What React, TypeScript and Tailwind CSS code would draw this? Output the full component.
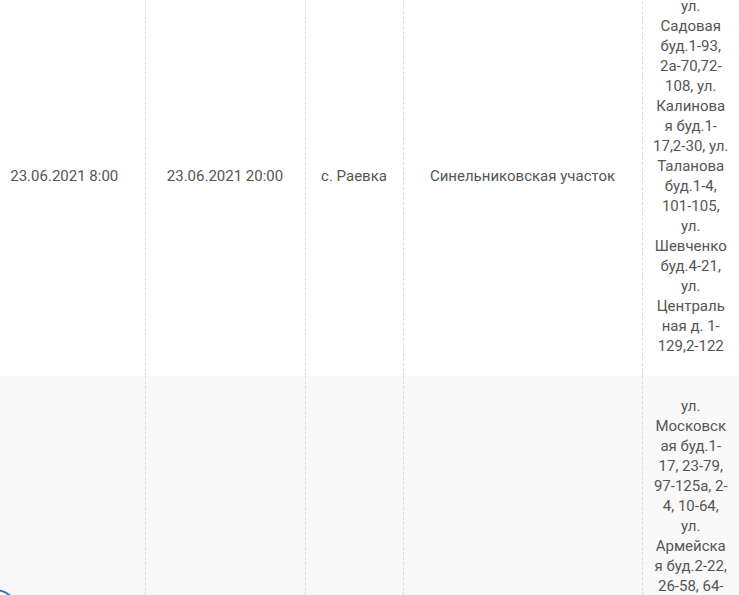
const rows = [
  {
    start: '23.06.2021 8:00',
    end: '23.06.2021 20:00',
    place: 'с. Раевка',
    area: 'Синельниковская участок',
    streets:
      'ул. Садовая буд.1-93, 2а-70,72-108, ул. Калиновая буд.1-17,2-30, ул. Таланова буд.1-4, 101-105, ул. Шевченко буд.4-21, ул. Центральная д. 1-129,2-122',
  },
  {
    start: '',
    end: '',
    place: '',
    area: '',
    streets:
      'ул. Московская буд.1-17, 23-79, 97-125а, 2-4, 10-64, ул. Армейская буд.2-22, 26-58, 64-70, 1-49, ул. Заводская буд.1-15',
  },
];

export default function App() {
  return (
    <div className="relative h-[595px] w-[739px] overflow-hidden bg-white font-['Roboto','Liberation_Sans',sans-serif] text-[15px] leading-5 text-[#555]">
      <table className="-ml-4 -mt-6 w-[755px] table-fixed border-collapse">
        <colgroup>
          <col className="w-[161px]" />
          <col className="w-[160px]" />
          <col className="w-[98px]" />
          <col className="w-[239px]" />
          <col className="w-[97px]" />
        </colgroup>
        <tbody>
          {rows.map((r, i) => (
            <tr key={i} className={i % 2 === 1 ? 'bg-[#f9f9f9]' : 'bg-white'}>
              <td className="border-r border-dashed border-[#dcdcdc] px-[10px] py-5 text-center align-middle">{r.start}</td>
              <td className="border-r border-dashed border-[#dcdcdc] px-[10px] py-5 text-center align-middle">{r.end}</td>
              <td className="border-r border-dashed border-[#dcdcdc] px-[10px] py-5 text-center align-middle">{r.place}</td>
              <td className="border-r border-dashed border-[#dcdcdc] px-[10px] py-5 text-center align-middle">{r.area}</td>
              <td className="break-words px-[10px] py-5 text-center align-middle">{r.streets}</td>
            </tr>
          ))}
        </tbody>
      </table>
      <div className="absolute left-[-29px] top-[589px] h-12 w-12 rounded-full border-2 border-[#2f6db5] bg-white" />
    </div>
  );
}
